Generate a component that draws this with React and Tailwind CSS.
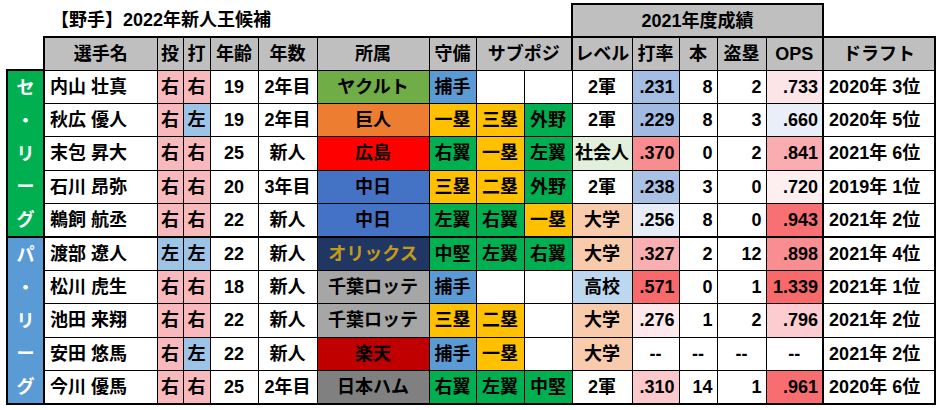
import React from "react";

const FONT = "font-['Liberation_Sans','Noto_Sans_CJK_JP',sans-serif]";

const HAND = { 右: "bg-[#f8b9bc]", 左: "bg-[#9dc3e6]" };
const TEAM = {
  ヤクルト: "bg-[#70ad47] text-black",
  巨人: "bg-[#ed7d31] text-black",
  広島: "bg-[#ff0000] text-black",
  中日: "bg-[#4472c4] text-black",
  オリックス: "bg-[#203764] text-[#c49a18]",
  千葉ロッテ: "bg-[#a6a6a6] text-black",
  楽天: "bg-[#c00000] text-black",
  日本ハム: "bg-[#808080] text-black",
};
const POS = {
  捕手: "bg-[#5b9bd5]",
  一塁: "bg-[#ffc000]",
  二塁: "bg-[#ffc000]",
  三塁: "bg-[#ffc000]",
  外野: "bg-[#00b050]",
  右翼: "bg-[#00b050]",
  左翼: "bg-[#00b050]",
  中堅: "bg-[#00b050]",
  "": "bg-white",
};
const LEVEL = {
  "2軍": "bg-white",
  社会人: "bg-[#e2efda]",
  大学: "bg-[#f8cbad]",
  高校: "bg-[#bdd7ee]",
};

const rows = [
  { name: "内山 壮真", t: "右", b: "右", age: "19", yr: "2年目", team: "ヤクルト", pos: ["捕手", "", ""], lv: "2軍", avg: ".231", avgc: "bg-[#a3bde3]", hr: "8", sb: "2", ops: ".733", opsc: "bg-[#fce5e8]", draft: "2020年 3位" },
  { name: "秋広 優人", t: "右", b: "左", age: "19", yr: "2年目", team: "巨人", pos: ["一塁", "三塁", "外野"], lv: "2軍", avg: ".229", avgc: "bg-[#a0bae2]", hr: "8", sb: "3", ops: ".660", opsc: "bg-[#e9eef8]", draft: "2020年 5位" },
  { name: "末包 昇大", t: "右", b: "右", age: "25", yr: "新人", team: "広島", pos: ["右翼", "一塁", "左翼"], lv: "社会人", avg: ".370", avgc: "bg-[#f88c8f]", hr: "0", sb: "2", ops: ".841", opsc: "bg-[#f9adb0]", draft: "2021年 6位" },
  { name: "石川 昂弥", t: "右", b: "右", age: "20", yr: "3年目", team: "中日", pos: ["三塁", "二塁", "外野"], lv: "2軍", avg: ".238", avgc: "bg-[#a9c1e5]", hr: "3", sb: "0", ops: ".720", opsc: "bg-[#fdeef0]", draft: "2019年 1位" },
  { name: "鵜飼 航丞", t: "右", b: "右", age: "22", yr: "新人", team: "中日", pos: ["左翼", "右翼", "一塁"], lv: "大学", avg: ".256", avgc: "bg-[#e7edf7]", hr: "8", sb: "0", ops: ".943", opsc: "bg-[#f87073]", draft: "2021年 2位" },
  { name: "渡部 遼人", t: "左", b: "左", age: "22", yr: "新人", team: "オリックス", pos: ["中堅", "左翼", "右翼"], lv: "大学", avg: ".327", avgc: "bg-[#f9afb2]", hr: "2", sb: "12", ops: ".898", opsc: "bg-[#f88e91]", draft: "2021年 4位" },
  { name: "松川 虎生", t: "右", b: "右", age: "18", yr: "新人", team: "千葉ロッテ", pos: ["捕手", "", ""], lv: "高校", avg: ".571", avgc: "bg-[#f8696b]", hr: "0", sb: "1", ops: "1.339", opsc: "bg-[#f8696b]", draft: "2021年 1位" },
  { name: "池田 来翔", t: "右", b: "右", age: "22", yr: "新人", team: "千葉ロッテ", pos: ["三塁", "二塁", ""], lv: "大学", avg: ".276", avgc: "bg-[#fde9ec]", hr: "1", sb: "2", ops: ".796", opsc: "bg-[#fbcdd0]", draft: "2021年 2位" },
  { name: "安田 悠馬", t: "右", b: "左", age: "22", yr: "新人", team: "楽天", pos: ["捕手", "一塁", ""], lv: "大学", avg: "--", avgc: "bg-white", hr: "--", sb: "--", ops: "--", opsc: "bg-white", draft: "2021年 2位" },
  { name: "今川 優馬", t: "右", b: "右", age: "25", yr: "2年目", team: "日本ハム", pos: ["右翼", "左翼", "中堅"], lv: "2軍", avg: ".310", avgc: "bg-[#fbc8cb]", hr: "14", sb: "1", ops: ".961", opsc: "bg-[#f86e70]", draft: "2020年 6位" },
];

function League({ chars, bg }) {
  return (
    <td rowSpan={5} className={`p-0 border-2 border-black ${bg} text-white text-[18px] font-bold`}>
      <div className="flex flex-col">
        {chars.map((c, i) => (
          <div key={i} className="h-[33px] flex items-center justify-center leading-none">
            {c}
          </div>
        ))}
      </div>
    </td>
  );
}

function Num({ v, bg, extra = "" }) {
  const dash = v === "--";
  return (
    <td className={`p-0 border border-black ${bg} ${dash ? "text-center" : "text-right pr-[4px]"} ${extra}`}>{v}</td>
  );
}

export default function App() {
  const hdr = "p-0 border border-black border-t-2 bg-[#bfbfbf] text-center font-bold";
  return (
    <div className={`w-[940px] h-[410px] bg-white overflow-hidden ${FONT} text-[18px] text-black font-bold leading-none`}>
      <table className="table-fixed w-[928px] ml-[6px] mt-[3px]">
        <colgroup>
          <col className="w-[37px]" />
          <col className="w-[113px]" />
          <col className="w-[26px]" />
          <col className="w-[27px]" />
          <col className="w-[48px]" />
          <col className="w-[59px]" />
          <col className="w-[112px]" />
          <col className="w-[47px]" />
          <col className="w-[48px]" />
          <col className="w-[48px]" />
          <col className="w-[60px]" />
          <col className="w-[47px]" />
          <col className="w-[38px]" />
          <col className="w-[49px]" />
          <col className="w-[57px]" />
          <col className="w-[112px]" />
        </colgroup>
        <tbody>
          <tr className="h-[33px]">
            <td colSpan={10} className="p-0 pl-[44px] font-bold">【野手】2022年新人王候補</td>
            <td colSpan={5} className="p-0 border-2 border-black bg-[#bfbfbf] text-center font-bold">2021年度成績</td>
            <td className="p-0" />
          </tr>
          <tr className="h-[33px]">
            <td className="p-0" />
            <td className={`${hdr} border-l-2`}>選手名</td>
            <td className={hdr}>投</td>
            <td className={hdr}>打</td>
            <td className={hdr}>年齢</td>
            <td className={hdr}>年数</td>
            <td className={hdr}>所属</td>
            <td className={hdr}>守備</td>
            <td colSpan={2} className={hdr}>サブポジ</td>
            <td className={`${hdr} border-l-2`}>レベル</td>
            <td className={hdr}>打率</td>
            <td className={hdr}>本</td>
            <td className={hdr}>盗塁</td>
            <td className={hdr}>OPS</td>
            <td className={`${hdr} border-l-2 border-r-2`}>ドラフト</td>
          </tr>
          {rows.map((r, i) => {
            const bb = i === 4 || i === 9 ? "border-b-2" : "";
            const c = `p-0 border border-black ${bb}`;
            return (
              <tr key={i} className="h-[33px]">
                {i === 0 && <League chars={["セ", "・", "リ", "ー", "グ"]} bg="bg-[#00b050]" />}
                {i === 5 && <League chars={["パ", "・", "リ", "ー", "グ"]} bg="bg-[#5b9bd5]" />}
                <td className={`${c} border-l-2 bg-white pl-[5px] whitespace-nowrap`}>{r.name}</td>
                <td className={`${c} ${HAND[r.t]} text-center`}>{r.t}</td>
                <td className={`${c} ${HAND[r.b]} text-center`}>{r.b}</td>
                <td className={`${c} bg-white text-center`}>{r.age}</td>
                <td className={`${c} bg-white text-center`}>{r.yr}</td>
                <td className={`${c} ${TEAM[r.team]} text-center whitespace-nowrap`}>{r.team}</td>
                {r.pos.map((p, j) => (
                  <td key={j} className={`${c} ${POS[p]} text-center`}>{p}</td>
                ))}
                <td className={`${c} ${LEVEL[r.lv]} text-center whitespace-nowrap`}>{r.lv}</td>
                <Num v={r.avg} bg={r.avgc} extra={bb} />
                <Num v={r.hr} bg="bg-white" extra={bb} />
                <Num v={r.sb} bg="bg-white" extra={bb} />
                <Num v={r.ops} bg={r.opsc} extra={bb} />
                <td className={`${c} border-l-2 border-r-2 bg-white pl-[5px] whitespace-nowrap`}>{r.draft}</td>
              </tr>
            );
          })}
        </tbody>
      </table>
    </div>
  );
}
